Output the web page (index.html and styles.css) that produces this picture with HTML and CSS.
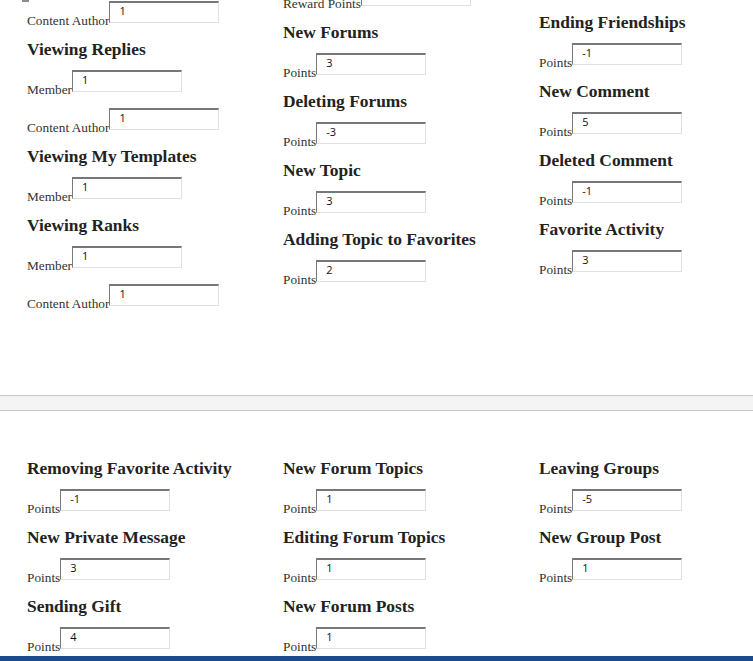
FILE: index.html
```html
<!DOCTYPE html>
<html>
<head>
<meta charset="utf-8">
<link rel="stylesheet" href="styles.css">
</head>
<body>
<section class="panel panel-top">
  <div class="col">
    <div class="tick"></div>
    <div class="row first-a"><label>Content Author</label><input type="text" value="1"></div>
    <h3>Viewing Replies</h3>
    <div class="row"><label>Member</label><input type="text" value="1"></div>
    <div class="row"><label>Content Author</label><input type="text" value="1"></div>
    <h3>Viewing My Templates</h3>
    <div class="row"><label>Member</label><input type="text" value="1"></div>
    <h3>Viewing Ranks</h3>
    <div class="row"><label>Member</label><input type="text" value="1"></div>
    <div class="row"><label>Content Author</label><input type="text" value="1"></div>
  </div>
  <div class="col">
    <div class="row first-b"><label>Reward Points</label><input type="text" value=""></div>
    <h3>New Forums</h3>
    <div class="row"><label>Points</label><input type="text" value="3"></div>
    <h3>Deleting Forums</h3>
    <div class="row"><label>Points</label><input type="text" value="-3"></div>
    <h3>New Topic</h3>
    <div class="row"><label>Points</label><input type="text" value="3"></div>
    <h3>Adding Topic to Favorites</h3>
    <div class="row"><label>Points</label><input type="text" value="2"></div>
  </div>
  <div class="col">
    <h3 class="first-c">Ending Friendships</h3>
    <div class="row"><label>Points</label><input type="text" value="-1"></div>
    <h3>New Comment</h3>
    <div class="row"><label>Points</label><input type="text" value="5"></div>
    <h3>Deleted Comment</h3>
    <div class="row"><label>Points</label><input type="text" value="-1"></div>
    <h3>Favorite Activity</h3>
    <div class="row"><label>Points</label><input type="text" value="3"></div>
  </div>
</section>
<div class="divider"></div>
<section class="panel panel-bottom">
  <div class="col">
    <h3>Removing Favorite Activity</h3>
    <div class="row"><label>Points</label><input type="text" value="-1"></div>
    <h3>New Private Message</h3>
    <div class="row"><label>Points</label><input type="text" value="3"></div>
    <h3>Sending Gift</h3>
    <div class="row"><label>Points</label><input type="text" value="4"></div>
  </div>
  <div class="col">
    <h3>New Forum Topics</h3>
    <div class="row"><label>Points</label><input type="text" value="1"></div>
    <h3>Editing Forum Topics</h3>
    <div class="row"><label>Points</label><input type="text" value="1"></div>
    <h3>New Forum Posts</h3>
    <div class="row"><label>Points</label><input type="text" value="1"></div>
  </div>
  <div class="col">
    <h3>Leaving Groups</h3>
    <div class="row"><label>Points</label><input type="text" value="-5"></div>
    <h3>New Group Post</h3>
    <div class="row"><label>Points</label><input type="text" value="1"></div>
  </div>
</section>
<footer class="footer"></footer>
</body>
</html>
```

FILE: styles.css
```css
html, body {
  margin: 0;
  padding: 0;
  background: #ffffff;
  overflow: hidden;
}
body {
  font-family: "Liberation Serif", "Times New Roman", serif;
  color: #333333;
  width: 753px;
  height: 661px;
}
.panel {
  display: grid;
  grid-template-columns: 256px 256px 1fr;
  padding-left: 27px;
  align-items: start;
}
.panel-top {
  height: 395px;
  box-sizing: border-box;
  overflow: hidden;
}
.panel-bottom {
  padding-top: 47px;
  height: 245px;
  box-sizing: border-box;
  overflow: hidden;
}
.col {
  display: flex;
  flex-direction: column;
  align-items: flex-start;
}
.tick {
  width: 7px;
  height: 2px;
  background: #8c8c8c;
  margin-left: -5px;
  margin-bottom: -2px;
}
h3 {
  margin: 0 0 11px 0;
  font-size: 17.4px;
  line-height: 20px;
  font-weight: bold;
  color: #222222;
}
.row {
  display: flex;
  align-items: flex-end;
  margin-bottom: 16px;
}
.row label {
  font-size: 13.3px;
  line-height: 5px;
  color: #333333;
}
.row input {
  box-sizing: border-box;
  width: 110px;
  height: 22px;
  margin: 0;
  padding: 1px 9px 5px 9px;
  font-family: "Open Sans", "Noto Sans", sans-serif;
  font-size: 11px;
  line-height: 14px;
  color: #111111;
  background: #ffffff;
  border-top: 2px solid #777777;
  border-left: 1px solid #7a7a7a;
  border-right: 1px solid #e0e0e0;
  border-bottom: 1px solid #e0e0e0;
  outline: none;
}
.first-a {
  margin-top: 1px;
}
.first-b {
  margin-top: -16px;
}
.first-c {
  margin-top: 12px;
}
.divider {
  height: 14px;
  background: #f4f4f4;
  border-top: 1px solid #c4c4c4;
  border-bottom: 1px solid #c4c4c4;
}
.footer {
  height: 5px;
  background: #1c4b8d;
}
```
